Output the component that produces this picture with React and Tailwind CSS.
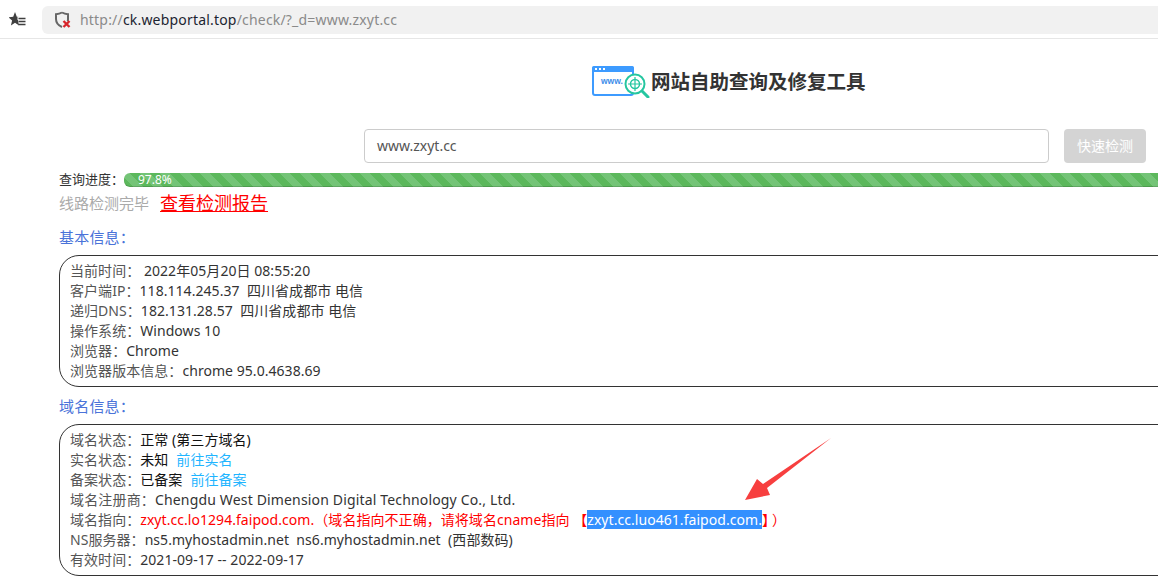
const fontCls = "font-['Noto_Sans','Noto_Sans_CJK_SC',sans-serif]"

const StarList = () => (
  <svg width="17" height="15" viewBox="0 0 17 15">
    <path d="M6 0l1.800 4.800 4.700.4-3.600 3.200 1.200 5.100L6 10.700l-4.100 2.800 1.200-5.100L-.5 5.200l4.700-.4z" fill="#3f3f3f" />
    <path d="M8.500 6.500h8M10 9.500h6.500M10 12.500h6.500" stroke="#fff" strokeWidth="3" />
    <path d="M9.500 6.500h7M9.500 9.500h7M9.500 12.500h7" stroke="#3f3f3f" strokeWidth="1.300" />
  </svg>
)

const ShieldX = () => (
  <svg width="18" height="18" viewBox="0 0 18 18">
    <path d="M8 1.500c2 1.200 4 1.600 6 1.700v5c0 .8-.1 1.400-.3 2M8 16c-3-1.300-6-3.500-6-8V3.200c2-.1 4-.5 6-1.700" fill="none" stroke="#666" strokeWidth="2" />
    <path d="M9.500 10l6 6M15.500 10l-6 6" stroke="#d8262c" strokeWidth="2.400" />
  </svg>
)

const Logo = () => (
  <svg width="58" height="32" viewBox="0 0 58 32">
    <rect x="1" y="1" width="40" height="28" rx="2" fill="#fff" stroke="#3d9bff" strokeWidth="2" />
    <rect x="0" y="0" width="42" height="6" rx="2" fill="#3d9bff" />
    <rect x="3" y="2" width="2" height="2" fill="#fff" />
    <rect x="7" y="2" width="2" height="2" fill="#fff" />
    <rect x="11" y="2" width="2" height="2" fill="#fff" />
    <text x="9" y="18" fontSize="8.500" fontWeight="700" fill="#3d8eea" fontFamily="'Liberation Sans',sans-serif">www.</text>
    <circle cx="43" cy="18" r="9.500" fill="#fff" stroke="#25c6a0" strokeWidth="2" />
    <circle cx="43" cy="18" r="4.500" fill="none" stroke="#25c6a0" strokeWidth="1.500" />
    <path d="M43 11v14M36 18h14" stroke="#25c6a0" strokeWidth="1.200" />
    <path d="M50 25l6 6" stroke="#25c6a0" strokeWidth="3" strokeLinecap="round" />
  </svg>
)

const Arrow = () => (
  <svg className="absolute left-[740px] top-[434px]" width="96" height="70" viewBox="740 434 96 70">
    <path d="M831 438L763 484L757 479L745 500L770 495L767 488Z" fill="#f73f3f" />
  </svg>
)

const Label = ({ children }) => <span className="text-[#555]">{children}</span>
const Value = ({ children }) => <span className="text-[#333]">{children}</span>
const Go = ({ children }) => <span className="text-[#1fb5ff] ml-2">{children}</span>

const Section = ({ title, children }) => (
  <div>
    <div className="text-[15px] leading-5 text-[#4a73d9] pl-[59px] tracking-[0.2px]">{title}</div>
    <div className="ml-[59px] -mr-6 mt-[8px] border border-[#333] rounded-[20px] py-[5px] pl-[10px] text-sm leading-5 whitespace-pre tracking-[0.05px]">
      {children}
    </div>
  </div>
)

export default function App() {
  return (
    <div className={`relative w-[1158px] h-[581px] overflow-hidden bg-white ${fontCls}`}>
      {/* browser bar */}
      <div className="flex items-center h-[39px] border-b border-[#e6e6e6] pl-[9px] pt-[1px]">
        <StarList />
        <div className="flex items-center flex-1 h-[28px] ml-[16px] pl-3 gap-[8px] bg-[#f1f1f1] rounded-l-md">
          <ShieldX />
          <span className="text-sm text-[#8a8a8a] tracking-[0.19px]">
            http://<span className="text-[#1c2430]">ck.webportal.top</span>/check/?_d=www.zxyt.cc
          </span>
        </div>
      </div>

      {/* title */}
      <div className="flex items-center pl-[592px] pt-[27px]">
        <Logo />
        <h1 className="text-[19.5px] font-bold text-[#333] ml-[1px] leading-7">网站自助查询及修复工具</h1>
      </div>

      {/* search */}
      <div className="flex gap-[15px] pl-[364px] mt-[31px]">
        <div className="flex items-center w-[685px] h-[34px] border border-[#ccc] rounded px-3 text-sm text-[#555]">www.zxyt.cc</div>
        <button className="w-[82px] h-[34px] rounded bg-[#d4d4d4] text-white text-sm">快速检测</button>
      </div>

      {/* progress */}
      <div className="flex items-center mt-[10px] pl-[59px] h-[14px]">
        <span className="text-[13px] text-[#333] w-[65px]">查询进度：</span>
        <div className="flex-1 h-[14px] rounded-l-md bg-[#5cb85c] bg-[repeating-linear-gradient(45deg,#5cb85c_0,#5cb85c_7.070px,#74c477_7.070px,#74c477_14.140px)] shadow-[inset_0_-1px_0_rgba(0,0,0,0.15)] text-xs leading-[14px] text-white pl-[14px]">
          97.8%
        </div>
      </div>

      <div className="flex items-center pl-[59px] mt-[2px] h-[28px]">
        <span className="text-[15px] text-[#aaa]">线路检测完毕</span>
        <a className="text-lg text-[#f00] underline ml-[11px]">查看检测报告</a>
      </div>

      <div className="flex flex-col gap-[9px] mt-[10px]">
        <Section title="基本信息：">
          <div><Label>当前时间：</Label><Value> 2022年05月20日 08:55:20</Value></div>
          <div><Label>客户端IP：</Label><Value>118.114.245.37  四川省成都市 电信</Value></div>
          <div><Label>递归DNS：</Label><Value>182.131.28.57  四川省成都市 电信</Value></div>
          <div><Label>操作系统：</Label><Value>Windows 10</Value></div>
          <div><Label>浏览器：</Label><Value>Chrome</Value></div>
          <div><Label>浏览器版本信息：</Label><Value>chrome 95.0.4638.69</Value></div>
        </Section>
        <Section title="域名信息：">
          <div><Label>域名状态：</Label><span className="text-[#111]">正常 (第三方域名)</span></div>
          <div><Label>实名状态：</Label><span className="text-[#111]">未知</span><Go>前往实名</Go></div>
          <div><Label>备案状态：</Label><span className="text-[#111]">已备案</span><Go>前往备案</Go></div>
          <div className="tracking-[0.16px]"><Label>域名注册商：</Label><Value>Chengdu West Dimension Digital Technology Co., Ltd.</Value></div>
          <div>
            <Label>域名指向：</Label>
            <span className="text-[#f00]">zxyt.cc.lo1294.faipod.com.（域名指向不正确，请将域名cname指向 【<span className="bg-[#3390ff] text-white">zxyt.cc.luo461.faipod.com.</span>】<span className="ml-[3px]">）</span></span>
          </div>
          <div><Label>NS服务器：</Label><Value>ns5.myhostadmin.net  ns6.myhostadmin.net  (西部数码)</Value></div>
          <div><Label>有效时间：</Label><Value>2021-09-17 -- 2022-09-17</Value></div>
        </Section>
      </div>

      <Arrow />
    </div>
  )
}
